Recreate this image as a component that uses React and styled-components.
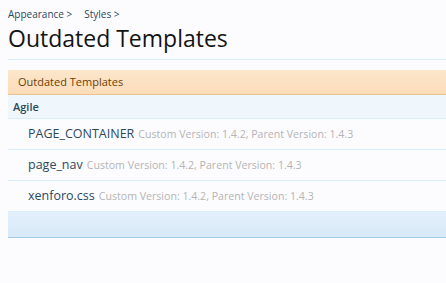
import React from 'react';
import styled, { createGlobalStyle } from 'styled-components';

const GlobalStyle = createGlobalStyle`
  html, body {
    margin: 0;
    padding: 0;
    background: #fcfcff;
  }
  body {
    font-family: 'Open Sans', 'DejaVu Sans', sans-serif;
  }
`;

const Page = styled.div`
  padding: 0 0 0 8px;
  width: 438px;
  height: 283px;
  overflow: hidden;
`;

const Breadcrumb = styled.div`
  display: flex;
  gap: 12px;
  padding-top: 7px;
  height: 14px;
  font-size: 10px;
  line-height: 14px;
  color: #2b485c;
`;

const Title = styled.h1`
  margin: 0;
  padding: 3px 0 6px 0;
  font-size: 23px;
  font-weight: 400;
  line-height: 29px;
  color: #141414;
  border-bottom: 1px solid #d7edfc;
`;

const Section = styled.div`
  margin-top: 10px;
`;

const SectionHeader = styled.div`
  height: 24px;
  line-height: 24px;
  padding-left: 10px;
  font-size: 11px;
  color: #6d3f03;
  background: linear-gradient(to bottom, #fbe6cc, #fcdcb8);
  border-bottom: 1px solid #e8c28f;
`;

const GroupTitle = styled.div`
  height: 23px;
  line-height: 23px;
  padding-left: 5px;
  font-size: 11px;
  font-weight: 600;
  color: #2b485c;
  background: #f0f7fc;
  border-bottom: 1px solid #d7edfc;
`;

const Row = styled.div`
  display: flex;
  align-items: baseline;
  gap: 4px;
  height: 30px;
  line-height: 30px;
  padding-left: 20px;
  border-bottom: 1px solid #d7edfc;
`;

const Name = styled.span`
  font-size: 12.5px;
  color: #2b485c;
`;

const Meta = styled.span`
  font-size: 10.6px;
  color: #b4b4b4;
`;

const Footer = styled.div`
  height: 25px;
  background: linear-gradient(to bottom, #e2f0fb, #d8e9f7);
  border-bottom: 1px solid #a5cae4;
`;

const templates = ['PAGE_CONTAINER', 'page_nav', 'xenforo.css'];

export default function App() {
  return (
    <>
      <GlobalStyle />
      <Page>
        <Breadcrumb>
          <span>Appearance &gt;</span>
          <span>Styles &gt;</span>
        </Breadcrumb>
        <Title>Outdated Templates</Title>
        <Section>
          <SectionHeader>Outdated Templates</SectionHeader>
          <GroupTitle>Agile</GroupTitle>
          {templates.map((t) => (
            <Row key={t}>
              <Name>{t}</Name>
              <Meta>Custom Version: 1.4.2, Parent Version: 1.4.3</Meta>
            </Row>
          ))}
          <Footer />
        </Section>
      </Page>
    </>
  );
}
